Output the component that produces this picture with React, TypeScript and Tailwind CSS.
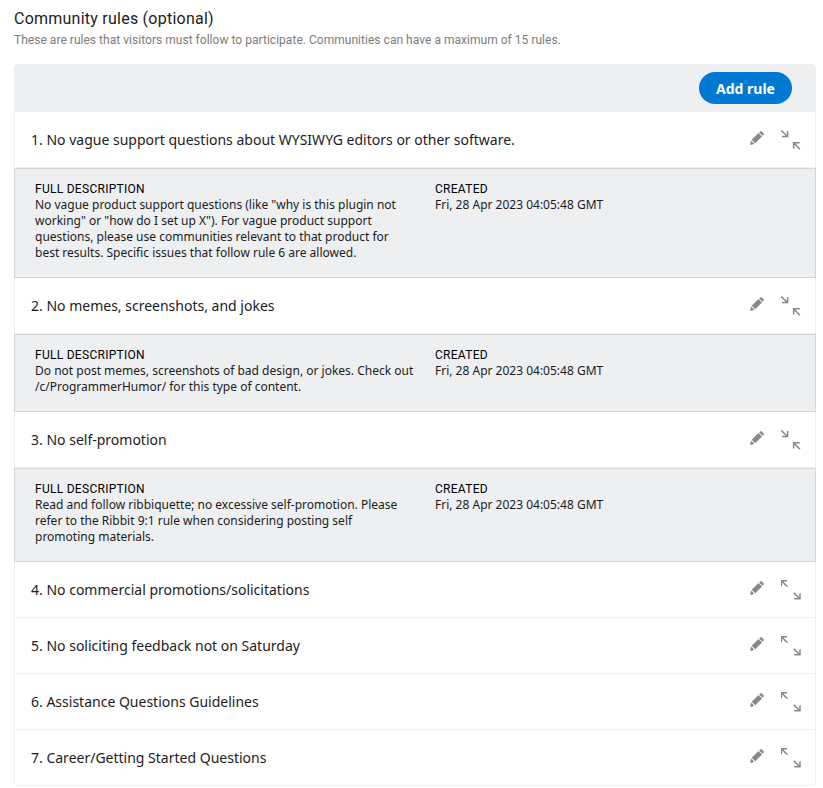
type Rule = { title: string; lines?: string[] };

const CREATED = "Fri, 28 Apr 2023 04:05:48 GMT";

const rules: Rule[] = [
  {
    title: "No vague support questions about WYSIWYG editors or other software.",
    lines: [
      'No vague product support questions (like "why is this plugin not',
      'working" or "how do I set up X"). For vague product support',
      "questions, please use communities relevant to that product for",
      "best results. Specific issues that follow rule 6 are allowed.",
    ],
  },
  {
    title: "No memes, screenshots, and jokes",
    lines: [
      "Do not post memes, screenshots of bad design, or jokes. Check out",
      "/c/ProgrammerHumor/ for this type of content.",
    ],
  },
  {
    title: "No self-promotion",
    lines: [
      "Read and follow ribbiquette; no excessive self-promotion. Please",
      "refer to the Ribbit 9:1 rule when considering posting self",
      "promoting materials.",
    ],
  },
  { title: "No commercial promotions/solicitations" },
  { title: "No soliciting feedback not on Saturday" },
  { title: "Assistance Questions Guidelines" },
  { title: "Career/Getting Started Questions" },
];

function PencilIcon() {
  return (
    <svg width="14" height="14" viewBox="0 0 14 14" fill="#878a8c">
      <path d="M0 14 L1.1 9.6 L4.4 12.9 Z" />
      <path d="M1.7 8.8 L8.5 2 L12 5.5 L5.2 12.3 Z" />
      <path d="M9.2 1.4 L10.3 0.4 Q11 -0.2 11.7 0.4 L13.6 2.3 Q14.2 3 13.6 3.7 L12.6 4.8 Z" />
    </svg>
  );
}

function CollapseIcon() {
  return (
    <svg width="20" height="20" viewBox="0 0 20 20" fill="none" stroke="#878a8c" strokeWidth="1.5">
      <path d="M0.2 0.4 L6.3 6.3 M6.6 1 V6.5 H1" />
      <path d="M19 19.2 L12.9 13.1 M12.6 18.5 V12.8 H18.8" />
    </svg>
  );
}

function ExpandIcon() {
  return (
    <svg width="20" height="20" viewBox="0 0 20 20" fill="none" stroke="#878a8c" strokeWidth="1.5">
      <path d="M6.5 6.8 L0.6 0.9 M0.4 6.2 V0.7 H6" />
      <path d="M12.7 12.7 L18.7 18.6 M19 13.2 V18.8 H13.3" />
    </svg>
  );
}

function Label({ children }: { children: string }) {
  return (
    <div className="font-['Roboto',sans-serif] text-[12px] leading-4 font-[450] tracking-[0.28px] text-black">
      {children}
    </div>
  );
}

export default function App() {
  return (
    <main className="h-[788px] bg-white pr-[7px] pl-[14px] pt-2 font-['Noto_Sans',sans-serif] text-[#1c1c1c]">
      <h1 className="font-['Roboto',sans-serif] text-[16px] leading-[22px] tracking-[0.24px] whitespace-nowrap">
        Community rules (optional)
      </h1>
      <p className="mt-0.5 font-['Roboto',sans-serif] text-[12px] leading-4 tracking-[0.03px] whitespace-nowrap text-[#7c7c7c]">
        These are rules that visitors must follow to participate. Communities can have a maximum of 15 rules.
      </p>
      <section className="mt-4 overflow-hidden rounded">
        <div className="flex h-12 items-center justify-end bg-[#edeff1] pr-6">
          <button className="h-8 w-[93px] rounded-full bg-[#0079d3] pt-px text-[14px] leading-[17px] font-bold text-white">
            Add rule
          </button>
        </div>
        {rules.map((rule, i) => (
          <div key={rule.title}>
            <div
              className={`flex h-14 items-center justify-between border-x border-b border-[#edeff1] pr-[14px] pl-4 ${i === rules.length - 1 ? "rounded-b" : ""}`}
            >
              <span className="text-[14px] leading-[18px] whitespace-nowrap">
                {i + 1}. {rule.title}
              </span>
              <span className="flex items-center gap-[17px]">
                <span className="-mt-[3px]">
                  <PencilIcon />
                </span>
                {rule.lines ? <CollapseIcon /> : <ExpandIcon />}
              </span>
            </div>
            {rule.lines && (
              <div className="flex border border-[#d4d5d6] bg-[#edeff1] pt-3 pr-5 pb-4 pl-5">
                <div className="w-[400px]">
                  <Label>FULL DESCRIPTION</Label>
                  {rule.lines.map((line) => (
                    <div key={line} className="text-[12px] leading-4 whitespace-nowrap">
                      {line}
                    </div>
                  ))}
                </div>
                <div>
                  <Label>CREATED</Label>
                  <div className="text-[12px] leading-4 whitespace-nowrap">{CREATED}</div>
                </div>
              </div>
            )}
          </div>
        ))}
      </section>
    </main>
  );
}
